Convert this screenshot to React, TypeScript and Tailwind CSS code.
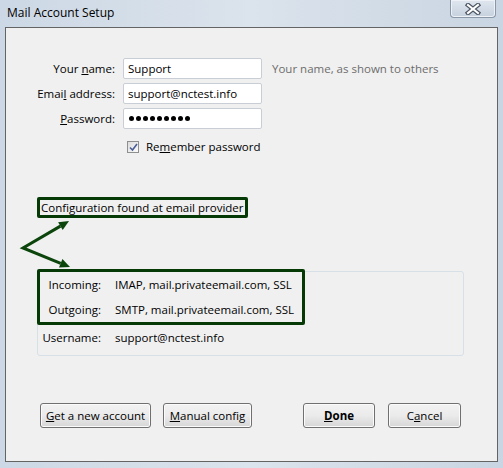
const font = { fontFamily: '"Segoe UI", "Open Sans", sans-serif' }

const Btn = ({ w, children, bold }: { w: string; children: React.ReactNode; bold?: boolean }) => (
  <button
    className={`${w} h-[25px] rounded-[3px] border border-[#707070] bg-gradient-to-b from-[#f2f2f2] via-[#ebebeb] to-[#d6d6d6] text-[11.5px] text-black shadow-[inset_0_0_0_1px_#fbfbfb] ${bold ? 'font-bold' : ''}`}
  >
    {children}
  </button>
)

const App = () => {
  return (
    <div className="relative w-[503px] h-[468px] flex flex-col bg-gradient-to-r from-[#ccd8e5] via-[#dbe3ec] to-[#c9d5e2] text-[11.5px] text-black" style={font}>
      {/* title bar */}
      <div className="h-[27px] flex items-center pl-[7px] pb-[1px] text-[12px]">Mail Account Setup</div>
      <div className="absolute top-0 left-[450px] w-[46px] h-[18px] rounded-b-[4px] border border-t-0 border-[#8a97a8] bg-gradient-to-b from-[#dfe6ef] to-[#c6d1de] shadow-[inset_0_0_0_1px_#eef2f7] flex items-center justify-center">
        <svg width="16" height="12" viewBox="0 0 16 12">
          <path d="M3 2 L13 10 M13 2 L3 10" stroke="#4d5663" strokeWidth="4.5" strokeLinecap="square" />
          <path d="M3 2 L13 10 M13 2 L3 10" stroke="#ffffff" strokeWidth="2" strokeLinecap="square" />
        </svg>
      </div>

      {/* client area */}
      <div className="mx-[5px] mb-[6px] flex-1 border border-[#646464] bg-[#f0f0f0] flex flex-col">
        <div className="pt-[30px] flex flex-col gap-[4px]">
          <div className="flex items-center h-[21px]">
            <span className="w-[109px] text-right">Your <u>n</u>ame:</span>
            <div className="ml-[8px] w-[139px] h-[21px] border border-[#c9ced6] rounded-[2px] bg-white px-[4px] flex items-center">Support</div>
            <span className="ml-[10px] text-[#6d6d6d]">Your name, as shown to others</span>
          </div>
          <div className="flex items-center h-[21px]">
            <span className="w-[109px] text-right">Emai<u>l</u> address:</span>
            <div className="ml-[8px] w-[139px] h-[21px] border border-[#c9ced6] rounded-[2px] bg-white px-[4px] flex items-center">support@nctest.info</div>
          </div>
          <div className="flex items-center h-[21px]">
            <span className="w-[109px] text-right"><u>P</u>assword:</span>
            <div className="ml-[8px] w-[139px] h-[21px] border border-[#c9ced6] rounded-[2px] bg-white px-[5px] flex items-center gap-[2px]">
              {Array.from({ length: 9 }).map((_, i) => (
                <span key={i} className="w-[5px] h-[5px] rounded-full bg-black" />
              ))}
            </div>
          </div>
        </div>

        <div className="mt-[10px] ml-[121px] flex items-center h-[16px] gap-[7px]">
          <span className="w-[12px] h-[12px] border border-[#8e8f8f] bg-gradient-to-br from-[#dcdcdc] to-[#fbfbfb] flex items-center justify-center">
            <svg width="9" height="9" viewBox="0 0 9 9">
              <path d="M1 4.5 L3.5 7 L8 1" stroke="#4a5f97" strokeWidth="1.6" fill="none" />
            </svg>
          </span>
          <span>Re<u>m</u>ember password</span>
        </div>

        <div className="mt-[42px] ml-[31px] self-start h-[21px] border-[3px] border-[#053905] rounded-[2px] px-[1px] flex items-center bg-[#f0f0f0]">
          Configuration found at email provider
        </div>

        <div className="mt-[53px] ml-[31px] w-[427px] h-[85px] border border-[#d7dfe7] rounded-[3px]">
          <div className="-mt-[3px] -ml-px w-[268px] h-[56px] border-[3px] border-[#053905] rounded-[2px] flex flex-col">
            <div className="flex items-center h-[26px]">
              <span className="w-[61px] text-right">Incoming:</span>
              <span className="ml-[14px]">IMAP, mail.privateemail.com, SSL</span>
            </div>
            <div className="flex items-center h-[26px]">
              <span className="w-[61px] text-right">Outgoing:</span>
              <span className="ml-[14px]">SMTP, mail.privateemail.com, SSL</span>
            </div>
          </div>
          <div className="flex items-center h-[26px]">
            <span className="w-[63px] text-right">Username:</span>
            <span className="ml-[14px]">support@nctest.info</span>
          </div>
        </div>

        <div className="mt-[47px] ml-[34px] flex items-center">
          <Btn w="w-[111px]"><u>G</u>et a new account</Btn>
          <span className="ml-[12px]"><Btn w="w-[89px]"><u>M</u>anual config</Btn></span>
          <span className="ml-[51px]"><Btn w="w-[72px]" bold><u>D</u>one</Btn></span>
          <span className="ml-[13px]"><Btn w="w-[73px]">C<u>a</u>ncel</Btn></span>
        </div>
      </div>

      {/* annotation arrows */}
      <svg className="absolute left-0 top-0 pointer-events-none" width="503" height="468">
        <path d="M60.4 226.1 L23 248 L60.7 263.3" stroke="#0b450b" strokeWidth="3" fill="none" strokeLinejoin="miter" />
        <polygon points="69,221 62.7,230 58.1,222.2" fill="#0b450b" />
        <polygon points="70,267 59,267.4 62.4,259.1" fill="#0b450b" />
      </svg>
    </div>
  )
}

export default App
